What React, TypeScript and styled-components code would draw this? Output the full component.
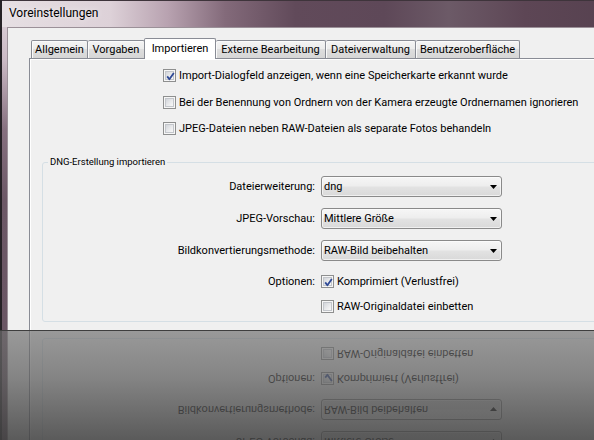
import React from "react";
import styled, { createGlobalStyle } from "styled-components";

const GlobalStyle = createGlobalStyle`
  html, body {
    margin: 0;
    padding: 0;
    overflow: hidden;
    background: #4a4a4a;
  }
  body {
    font-family: Roboto, "Liberation Sans", Arial, sans-serif;
    font-size: 11px;
    color: #000;
  }
`;

const Screen = styled.div`
  width: 594px;
  height: 440px;
  overflow: hidden;
`;

const Window = styled.div`
  width: 640px;
  height: 330px;
  box-sizing: border-box;
  display: flex;
  flex-direction: column;
  overflow: hidden;
  border-left: 2px solid #262226;
  background: linear-gradient(180deg, #e2d8de 0px, #cbbac5 60px, #86707f 130px, #6c5866 200px, #6a5664 330px);
`;

const TitleBar = styled.div`
  height: 27px;
  flex: none;
  display: flex;
  align-items: center;
  padding: 0 0 2px 7px;
  box-sizing: border-box;
  font-size: 12px;
  color: #000;
  text-shadow: 0 0 6px rgba(255, 255, 255, 0.8);
  background: linear-gradient(
    90deg,
    #e6dfe3 0%,
    #ddd1d8 17%,
    #b8a2b0 26%,
    #836a7a 35%,
    #614a5a 46%,
    #5e4858 60%,
    #6c5a67 70%,
    #5d4655 82%,
    #54404e 100%
  );
  border-top: 1px solid #3e343b;
`;

const Body = styled.div`
  flex: 1;
  min-height: 0;
  display: flex;
  padding-left: 5px;
`;

const Client = styled.div`
  flex: 1;
  display: flex;
  flex-direction: column;
  background: #f0f0f0;
  border-left: 1px solid #9b9098;
  border-top: 1px solid #9b9098;
  padding: 10px 0 0 21px;
`;

const TabStrip = styled.div`
  display: flex;
  align-items: flex-end;
  height: 20px;
  margin-left: 2px;
`;

const Tab = styled.div<{ $w: number; $active?: boolean; $first?: boolean }>`
  width: ${(p) => p.$w}px;
  height: ${(p) => (p.$active ? 21 : 18)}px;
  margin-bottom: ${(p) => (p.$active ? -1 : 0)}px;
  margin-left: ${(p) => (p.$active ? -1 : 0)}px;
  box-sizing: border-box;
  display: flex;
  align-items: center;
  justify-content: center;
  padding-bottom: ${(p) => (p.$active ? 2 : 0)}px;
  border: 1px solid #898c95;
  border-bottom: none;
  border-left: ${(p) => (p.$active || p.$first ? "1px solid #898c95" : "none")};
  border-radius: 2px 2px 0 0;
  position: relative;
  z-index: ${(p) => (p.$active ? 1 : 0)};
  background: ${(p) =>
    p.$active
      ? "#fff"
      : "linear-gradient(180deg, #f4f4f4 0%, #ebebeb 50%, #dedede 50%, #d6d6d6 100%)"};
  box-shadow: ${(p) => (p.$active ? "none" : "inset 1px 1px 0 #fafafa")};
  color: #000;
  white-space: nowrap;
`;

const Panel = styled.div`
  flex: 1;
  display: flex;
  flex-direction: column;
  border: 1px solid #898c95;
  border-bottom: none;
  border-right: none;
  box-shadow: inset 1px 1px 0 #fff;
  background: #f0f0f0;
  padding-top: 10px;
`;

const CheckList = styled.div`
  display: flex;
  flex-direction: column;
  gap: 13.5px;
  padding-left: 133px;
`;

const CheckRow = styled.label`
  display: flex;
  align-items: center;
  gap: 3px;
  height: 13px;
  line-height: 13px;
  white-space: nowrap;
`;

const Box = styled.span`
  position: relative;
  flex: none;
  width: 13px;
  height: 13px;
  box-sizing: border-box;
  border: 1px solid #8e8f8f;
  background: #f6f6f6;
  &::before {
    content: "";
    position: absolute;
    inset: 1px;
    border: 1px solid #c3c6cb;
    background: linear-gradient(135deg, #d2d5da 0%, #e9eaec 55%, #f8f8f8 100%);
  }
  svg {
    position: absolute;
    left: 0;
    top: 0;
  }
`;

const GroupBox = styled.fieldset`
  margin: 21px 12px 0;
  padding: 8px 0 8px;
  border: 1px solid #d5dfe5;
  border-radius: 3px;
  min-width: 0;
`;

const GroupLegend = styled.legend`
  margin-left: 5px;
  padding: 0 2px;
  font-size: 9.5px;
  line-height: 12px;
  color: #000;
`;

const FormRows = styled.div`
  display: flex;
  flex-direction: column;
  gap: 11px;
`;

const FieldRow = styled.div<{ $extra?: number }>`
  display: grid;
  grid-template-columns: 272px 181px;
  column-gap: 6px;
  align-items: center;
  margin-top: ${(p) => p.$extra ?? 0}px;
`;

const FieldLabel = styled.span`
  text-align: right;
  white-space: nowrap;
`;

const Select = styled.div`
  height: 21px;
  box-sizing: border-box;
  display: flex;
  align-items: center;
  justify-content: space-between;
  padding: 0 4px 0 2px;
  border: 1px solid #8a8a8a;
  border-radius: 3px;
  background: linear-gradient(180deg, #f6f6f6 0%, #eeeeee 45%, #e2e2e2 55%, #d9d9d9 100%);
  box-shadow: inset 0 0 0 1px rgba(255, 255, 255, 0.6);
  white-space: nowrap;
`;

const Reflection = styled.div`
  position: relative;
  height: 110px;
  overflow: hidden;
`;

const Mirror = styled.div`
  transform: scaleY(-1);
`;

const Shade = styled.div`
  position: absolute;
  inset: 0;
  background: linear-gradient(
    180deg,
    #3e3e3e 0px,
    #3e3e3e 1px,
    rgba(112, 112, 112, 0.68) 1px,
    rgba(95, 95, 95, 0.74) 47px,
    rgba(66, 66, 66, 0.86) 110px
  );
`;

function Checkbox({ checked }: { checked?: boolean }) {
  return (
    <Box>
      {checked && (
        <svg width="13" height="13" viewBox="0 0 13 13">
          <path
            d="M3.2 6.4 L5.4 9.3 L9.8 3"
            fill="none"
            stroke="#2f4a96"
            strokeWidth="1.8"
            strokeLinejoin="round"
          />
        </svg>
      )}
    </Box>
  );
}

function Dropdown({ value }: { value: string }) {
  return (
    <Select>
      <span>{value}</span>
      <svg width="7" height="4" viewBox="0 0 7 4">
        <polygon points="0,0 7,0 3.5,4" fill="#000" />
      </svg>
    </Select>
  );
}

const tabs = [
  { label: "Allgemein", w: 57 },
  { label: "Vorgaben", w: 57 },
  { label: "Importieren", w: 72, active: true },
  { label: "Externe Bearbeitung", w: 110 },
  { label: "Dateiverwaltung", w: 90 },
  { label: "Benutzeroberfläche", w: 104 },
];

function Dialog() {
  return (
    <Window>
      <TitleBar>Voreinstellungen</TitleBar>
      <Body>
        <Client>
          <TabStrip>
            {tabs.map((t, i) => (
              <Tab key={t.label} $w={t.w} $active={t.active} $first={i === 0}>
                {t.label}
              </Tab>
            ))}
          </TabStrip>
          <Panel>
            <CheckList>
              <CheckRow>
                <Checkbox checked />
                Import-Dialogfeld anzeigen, wenn eine Speicherkarte erkannt wurde
              </CheckRow>
              <CheckRow>
                <Checkbox />
                Bei der Benennung von Ordnern von der Kamera erzeugte Ordnernamen ignorieren
              </CheckRow>
              <CheckRow>
                <Checkbox />
                JPEG-Dateien neben RAW-Dateien als separate Fotos behandeln
              </CheckRow>
            </CheckList>
            <GroupBox>
              <GroupLegend>DNG-Erstellung importieren</GroupLegend>
              <FormRows>
                <FieldRow>
                  <FieldLabel>Dateierweiterung:</FieldLabel>
                  <Dropdown value="dng" />
                </FieldRow>
                <FieldRow>
                  <FieldLabel>JPEG-Vorschau:</FieldLabel>
                  <Dropdown value="Mittlere Größe" />
                </FieldRow>
                <FieldRow>
                  <FieldLabel>Bildkonvertierungsmethode:</FieldLabel>
                  <Dropdown value="RAW-Bild beibehalten" />
                </FieldRow>
                <FieldRow $extra={3}>
                  <FieldLabel>Optionen:</FieldLabel>
                  <CheckRow>
                    <Checkbox checked />
                    Komprimiert (Verlustfrei)
                  </CheckRow>
                </FieldRow>
                <FieldRow $extra={1}>
                  <span />
                  <CheckRow>
                    <Checkbox />
                    RAW-Originaldatei einbetten
                  </CheckRow>
                </FieldRow>
              </FormRows>
            </GroupBox>
          </Panel>
        </Client>
      </Body>
    </Window>
  );
}

export default function App() {
  return (
    <Screen>
      <GlobalStyle />
      <Dialog />
      <Reflection aria-hidden>
        <Mirror>
          <Dialog />
        </Mirror>
        <Shade />
      </Reflection>
    </Screen>
  );
}
